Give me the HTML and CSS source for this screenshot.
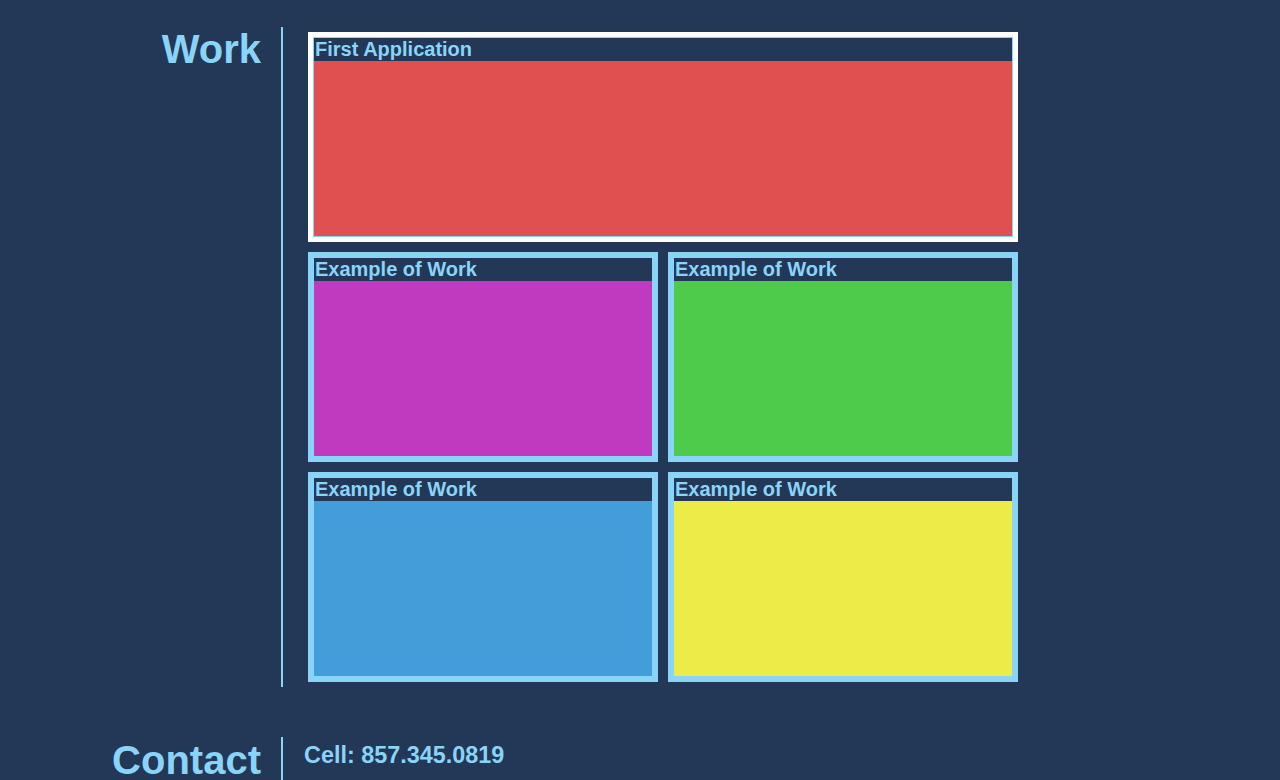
FILE: index.html
```html
<!DOCTYPE html>
<html lang="en">
<head>
<meta charset="utf-8">
<title>Portfolio</title>
<link rel="stylesheet" href="styles.css">
</head>
<body>
<section class="section work">
  <h2 class="section-title">Work</h2>
  <div class="section-body">
    <div class="grid">
      <div class="card featured">
        <div class="card-inner">
          <div class="card-title">First Application</div>
          <div class="swatch red"></div>
        </div>
      </div>
      <div class="card">
        <div class="card-inner">
          <div class="card-title">Example of Work</div>
          <div class="swatch magenta"></div>
        </div>
      </div>
      <div class="card">
        <div class="card-inner">
          <div class="card-title">Example of Work</div>
          <div class="swatch green"></div>
        </div>
      </div>
      <div class="card">
        <div class="card-inner">
          <div class="card-title">Example of Work</div>
          <div class="swatch blue"></div>
        </div>
      </div>
      <div class="card">
        <div class="card-inner">
          <div class="card-title">Example of Work</div>
          <div class="swatch yellow"></div>
        </div>
      </div>
    </div>
  </div>
</section>
<section class="section contact">
  <h2 class="section-title">Contact</h2>
  <div class="section-body">
    <p class="cell">Cell: 857.345.0819</p>
  </div>
</section>
</body>
</html>
```
FILE: styles.css
```css
html, body {
  margin: 0;
  padding: 0;
}
body {
  background: #233756;
  color: #89d4f7;
  font-family: "Liberation Sans", Arial, sans-serif;
  overflow: hidden;
  height: 780px;
}
.section {
  display: flex;
  align-items: stretch;
}
.work {
  margin-top: 27px;
}
.contact {
  margin-top: 50px;
}
.section-title {
  width: 261px;
  flex: none;
  margin: 0;
  text-align: right;
  font-size: 40px;
  font-weight: bold;
  line-height: 42px;
  color: #89d4f7;
}
.work .section-title {
  padding-top: 1px;
}
.contact .section-title {
  padding-top: 2px;
}
.section-body {
  margin-left: 20px;
  border-left: 2px solid #89d4f7;
}
.work .section-body {
  padding: 5px 0 5px 25px;
}
.contact .section-body {
  padding: 0 0 0 21px;
}
.grid {
  width: 710px;
  display: grid;
  grid-template-columns: 1fr 1fr;
  gap: 10px;
}
.card {
  border: 5px solid #89d4f7;
  height: 210px;
  box-sizing: border-box;
}
.card.featured {
  grid-column: span 2;
  border-color: #ffffff;
}
.card-inner {
  border: 1px solid #89d4f7;
  height: 100%;
  box-sizing: border-box;
  display: flex;
  flex-direction: column;
}
.card-title {
  font-size: 20px;
  font-weight: bold;
  line-height: 23px;
  height: 23px;
  padding-left: 1px;
  background: #233756;
  color: #89d4f7;
  white-space: nowrap;
}
.swatch {
  flex: 1;
}
.red { background: #e05050; }
.magenta { background: #c03abf; }
.green { background: #4fcb4b; }
.blue { background: #439dd8; }
.yellow { background: #edeb47; }
.cell {
  margin: 0;
  padding-top: 5px;
  font-size: 23.4px;
  font-weight: bold;
  line-height: 27px;
}
```
